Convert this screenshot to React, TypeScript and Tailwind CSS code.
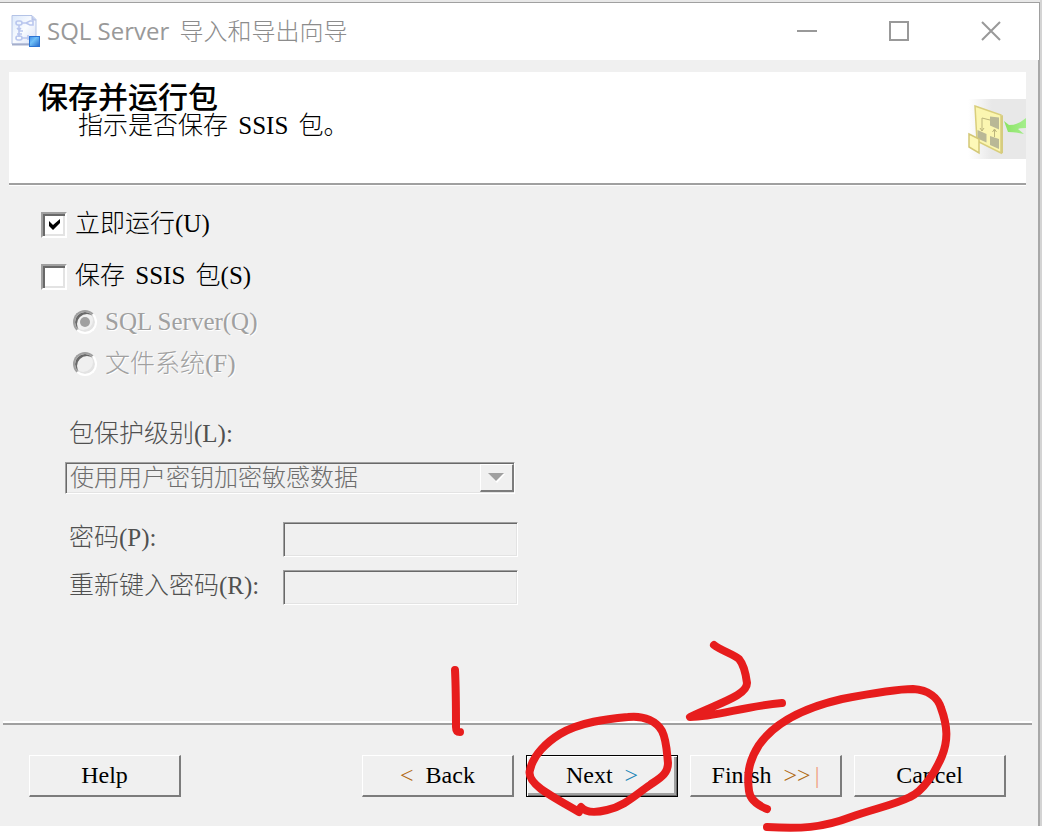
import type { ReactNode } from 'react';

const raised =
  'border-t border-l border-white border-r-2 border-b-2 border-r-[#7c7c7c] border-b-[#7c7c7c]';
const sunken =
  'border border-t-[#a0a0a0] border-l-[#a0a0a0] border-r-white border-b-white shadow-[inset_1px_1px_#696969,inset_-1px_-1px_#e3e3e3]';
const sunkenThick =
  'appearance-none border-2 border-t-[#a0a0a0] border-l-[#a0a0a0] border-r-white border-b-white shadow-[inset_2px_2px_#696969,inset_-2px_-2px_#e3e3e3]';

function PackageIcon() {
  return (
    <svg width="30" height="32" viewBox="0 0 30 32" aria-hidden="true">
      <defs>
        <linearGradient id="page" x1="0" y1="0" x2="1" y2="1">
          <stop offset="0" stopColor="#dbe8fb" />
          <stop offset="0.5" stopColor="#fafcff" />
          <stop offset="1" stopColor="#d5def4" />
        </linearGradient>
        <linearGradient id="cube" x1="0" y1="0" x2="1" y2="1">
          <stop offset="0" stopColor="#3f8be8" />
          <stop offset="0.4" stopColor="#6fc0f8" />
          <stop offset="1" stopColor="#2467c9" />
        </linearGradient>
      </defs>
      <path d="M1 .5h20l4 4V29H1z" fill="url(#page)" stroke="#b4c3e6" />
      <path d="M1 29.5h24" stroke="#a5aecb" strokeWidth="2" />
      <path d="M21 1v4h4" fill="#c2cff0" stroke="#b4bfe4" />
      <g fill="none" stroke="#b9c6ee" strokeWidth="1.6">
        <rect x="5" y="6" width="6" height="4" rx="2" />
        <path d="M11 8h4l4-2h3v4h-3l-4-2M8 10v12M6 13l2 2 2-2M8 16h4M6 19h5" />
        <rect x="5" y="21" width="6" height="4" rx="2" />
        <path d="M11 23h9M17 20v5" />
      </g>
      <rect x="18.500" y="21.500" width="10" height="10" fill="url(#cube)" stroke="#2c74d3" />
    </svg>
  );
}

function WizardPicture() {
  return (
    <svg
      className="mt-[27px] shrink-0 self-start"
      width="60"
      height="60"
      viewBox="-2 0 60 60"
      aria-hidden="true"
    >
      <defs>
        <linearGradient id="fade">
          <stop offset="0" stopColor="#fff" />
          <stop offset="0.4" stopColor="#e8e8e8" />
        </linearGradient>
        <linearGradient id="arrow">
          <stop offset="0" stopColor="#8be363" />
          <stop offset="1" stopColor="#a5ee8d" />
        </linearGradient>
      </defs>
      <rect width="60" height="60" fill="url(#fade)" />
      <path d="M7 7l26 9v38L9 42z" fill="#fbf6b0" stroke="#d9ce7c" strokeWidth="1.500" />
      <path d="M33 17l2-1v38l-2 1z" fill="#d6cc80" />
      <path
        d="M22 17.500v9l9 4v-12zM9.500 31v8.500l9 4V35zM22 37v9l9 4v-10z"
        fill="#b9b896"
      />
      <path
        d="M22 21l-8-2v13M12 29l2 3 2-3M26.500 38v-7M24.500 33l2-3 2 3"
        fill="none"
        stroke="#bcb57c"
      />
      <path d="M1 35l10 5v14L1 48z" fill="#fdf8b8" stroke="#d3c777" strokeWidth="1.500" />
      <path
        d="M36 22l5 4q9 0 17-7v10q-6 0-8 1l6 5q-8-2-16-2z"
        fill="url(#arrow)"
      />
    </svg>
  );
}

// Pen marks drawn over the wizard's button row
function PenMarks() {
  return (
    <svg
      className="pointer-events-none absolute top-0 right-0 overflow-visible"
      width="645"
      height="42"
      viewBox="361 755 645 42"
      fill="none"
      stroke="#e71d1d"
      strokeWidth="8"
      strokeLinecap="round"
      strokeLinejoin="round"
      aria-hidden="true"
    >
      <path d="M455 670C456 690 456 708 456 727Q456 732 460 732" />
      <path d="M579 812C560 801 549 795 541 789C532 782 528 776 530 770C533 755 547 742 560 734C580 722 607 719 628 717C645 715 657 722 662 731C667 741 667 755 668 763C668 774 660 778 650 785C635 795 625 806 607 810C595 813 586 813 581 807" />
      <path d="M714 645C720 650 733 654 739 659C744 665 746 675 747 683C747 695 722 702 690 717C715 717 745 706 782 703" />
      <path d="M767 809C757 805 750 799 749 791C747 776 748 762 759 745C775 722 803 708 842 699C868 694 894 689 913 689C929 690 938 698 941 708C948 727 948 741 942 756C935 773 923 791 910 797C894 805 873 809 851 817C822 828 800 829 767 827" />
    </svg>
  );
}

function WizardButton({
  children,
  isDefault,
}: {
  children: ReactNode;
  isDefault?: boolean;
}) {
  return (
    <button
      type="button"
      className={`flex h-[42px] w-[152px] items-center justify-center gap-3 bg-[#f0f0f0] pb-[2px] text-2xl ${
        isDefault
          ? 'border border-black shadow-[inset_1px_1px_#fff,inset_-1px_-1px_#696969,inset_-3px_-3px_#a0a0a0]'
          : raised
      }`}
    >
      {children}
    </button>
  );
}

function RunOption({
  id,
  checked,
  children,
}: {
  id: string;
  checked?: boolean;
  children: ReactNode;
}) {
  return (
    <div className="flex h-[52px] items-center gap-2">
      <div className="grid">
        <input
          id={id}
          type="checkbox"
          defaultChecked={checked}
          className={`peer col-start-1 row-start-1 size-[26px] bg-white ${sunkenThick}`}
        />
        <svg
          className="pointer-events-none invisible col-start-1 row-start-1 peer-checked:visible"
          width="26"
          height="26"
          viewBox="0 0 26 26"
          aria-hidden="true"
        >
          <path d="M8 9v5l4 4 7-7V7l-7 6z" fill="#000" />
        </svg>
      </div>
      <label htmlFor={id} className="pb-[2px] text-[25px] leading-8">
        {children}
      </label>
    </div>
  );
}

function TargetOption({
  id,
  checked,
  children,
}: {
  id: string;
  checked?: boolean;
  children: ReactNode;
}) {
  return (
    <div className="flex h-[42px] items-center gap-2">
      <div className="grid place-items-center">
        <input
          id={id}
          type="radio"
          name="target"
          defaultChecked={checked}
          disabled
          className={`peer col-start-1 row-start-1 size-6 rounded-full ${sunkenThick}`}
        />
        <span className="invisible col-start-1 row-start-1 size-[10px] rounded-full bg-[#a0a0a0] peer-checked:visible" />
      </div>
      <label
        htmlFor={id}
        className="text-[25px] leading-8 text-[#a0a0a0] [text-shadow:1px_1px_#fff]"
      >
        {children}
      </label>
    </div>
  );
}

function PasswordField({ id, label }: { id: string; label: string }) {
  return (
    <div className="flex items-center">
      <label
        htmlFor={id}
        className="w-[214px] pb-[3px] text-[25px] leading-8 whitespace-nowrap text-[#505050]"
      >
        {label}
      </label>
      <input
        id={id}
        type="password"
        disabled
        className={`h-[35px] w-[235px] px-1 ${sunken}`}
      />
    </div>
  );
}

function TitleBar() {
  return (
    <header className="flex h-[58px] items-center border-t border-r border-[#a0a0a0] bg-white pr-[38px] pb-[2px] pl-[11px]">
      <PackageIcon />
      <h1 className="ml-[6px] flex-1 font-['Open_Sans','Noto_Sans_CJK_SC',sans-serif] text-2xl font-normal whitespace-nowrap text-[#999]">
        SQL Server{' '}
        <span className="ml-1 font-light text-[#8c8c8c]">导入和导出向导</span>
      </h1>
      <div className="flex items-center gap-[72px]">
        <button type="button" aria-label="最小化">
          <svg width="20" height="20" stroke="#999" strokeWidth="2">
            <path d="M0 10h20" />
          </svg>
        </button>
        <button type="button" aria-label="最大化">
          <svg width="20" height="20" fill="none" stroke="#999" strokeWidth="2">
            <path d="M1 1h18v18H1z" />
          </svg>
        </button>
        <button type="button" aria-label="关闭">
          <svg width="20" height="20" stroke="#999" strokeWidth="2">
            <path d="M1 1l18 18M19 1L1 19" />
          </svg>
        </button>
      </div>
    </header>
  );
}

export default function App() {
  return (
    <div className="flex min-h-screen flex-col bg-white pb-2 font-['Liberation_Serif','Noto_Sans_CJK_SC',serif] font-light text-black">
      <div className="flex flex-1 bg-[#d4d4d4]">
        <div className="flex flex-1 flex-col">
          <div className="h-[2px] bg-[#e8e8e8]" />
          <TitleBar />
          <main className="flex flex-1 flex-col border-r-2 border-[#a8a8a8] bg-[#f0f0f0]">
            <section className="mt-3 mr-3 ml-[9px] flex h-[113px] items-center justify-between border-b-2 border-[#a0a0a0] bg-white shadow-[0_1px_#fff]">
              <div className="self-start pt-3 pl-[29px]">
                <h2 className="text-3xl leading-7 font-medium">保存并运行包</h2>
                <p className="pl-10 text-[25px] leading-7">
                  指示是否保存 <span className="mx-1">SSIS</span> 包。
                </p>
              </div>
              <WizardPicture />
            </section>

            <form className="flex-1 pt-[14px] pl-[41px]">
              <RunOption id="run-now" checked>
                立即运行(U)
              </RunOption>
              <RunOption id="save-package">
                保存 <span className="mx-1">SSIS</span> 包(S)
              </RunOption>
              <div className="-mt-[2px] pl-8">
                <TargetOption id="target-server" checked>
                  SQL Server(Q)
                </TargetOption>
                <TargetOption id="target-file">文件系统(F)</TargetOption>
              </div>

              <div className="mt-[33px] box-content flex w-[450px] flex-col gap-3 pl-6">
                <label
                  htmlFor="protection"
                  className="pl-1 text-[25px] leading-8 text-[#505050]"
                >
                  包保护级别(L):
                </label>
                <div className="grid">
                  <select
                    id="protection"
                    disabled
                    className={`col-start-1 row-start-1 h-8 appearance-none rounded-none bg-[#f0f0f0] pl-1 text-2xl leading-7 text-[#6d6d6d] opacity-100 ${sunken}`}
                  >
                    <option>使用用户密钥加密敏感数据</option>
                  </select>
                  <span
                    className={`pointer-events-none col-start-1 row-start-1 mr-[1px] flex h-7 w-[34px] items-center justify-center self-center justify-self-end bg-[#f0f0f0] ${raised}`}
                  >
                    <svg width="17" height="10" aria-hidden="true">
                      <path d="M1 1h16l-8 9z" fill="#fff" />
                      <path d="M0 0h16L8 8z" fill="#a0a0a0" />
                    </svg>
                  </span>
                </div>
              </div>

              <div className="mt-7 flex flex-col gap-[13px] pl-7">
                <PasswordField id="password" label="密码(P):" />
                <PasswordField id="password-again" label="重新键入密码(R):" />
              </div>
            </form>

            <footer className="mr-[6px] ml-[3px] border-t-2 border-white">
              <div className="flex items-start justify-between border-t-2 border-[#a0a0a0] px-[26px] pt-[30px] pb-[29px]">
                <WizardButton>Help</WizardButton>
                <div className="relative flex gap-3">
                  <WizardButton>
                    <span className="text-[#b06a10]">&lt;</span> Back
                  </WizardButton>
                  <WizardButton isDefault>
                    Next <span className="text-[#2086b8]">&gt;</span>
                  </WizardButton>
                  <WizardButton>
                    Finish
                    <span className="text-[#b06a10]">
                      &gt;&gt;<span className="ml-1 text-[#f0a080]">|</span>
                    </span>
                  </WizardButton>
                  <WizardButton>Cancel</WizardButton>
                  <PenMarks />
                </div>
              </div>
            </footer>
          </main>
        </div>
        <div className="w-[2px] bg-[#d4d4d4]" />
      </div>
    </div>
  );
}
